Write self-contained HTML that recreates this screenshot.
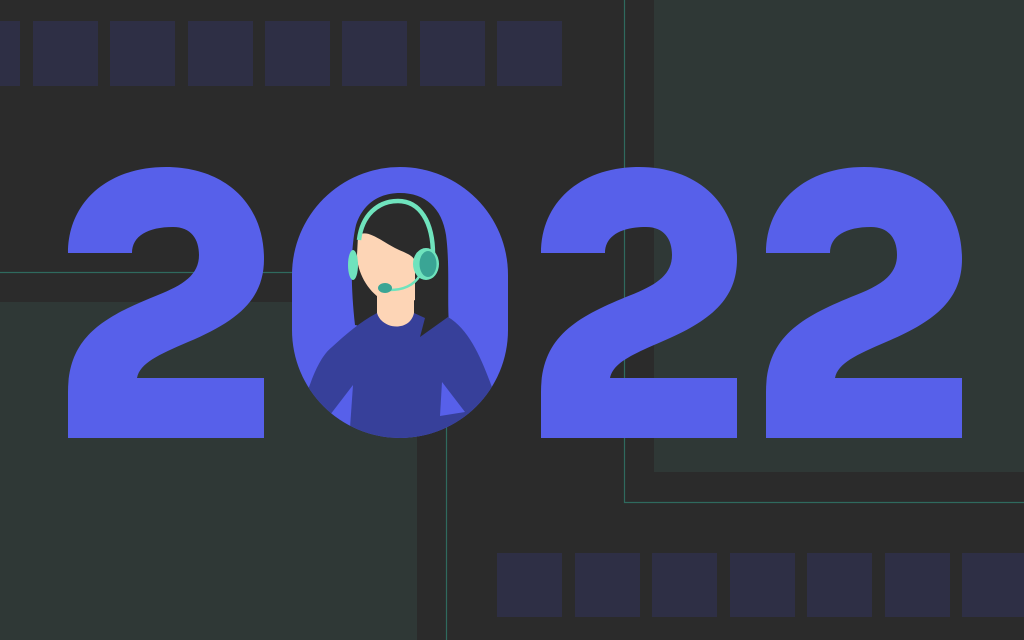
<!DOCTYPE html>
<html><head><meta charset="utf-8"><style>html,body{margin:0;padding:0;background:#2b2b2b;overflow:hidden}svg{display:block}</style></head>
<body>
<svg width="1024" height="640" viewBox="0 0 1024 640" xmlns="http://www.w3.org/2000/svg">
<defs>
<path id="two" d="M0,86 L64,86 C64,69 80,60 105,60 C123,60 131,72 131,88 C131,108 115,118 90,128 C35,150 0,170 0,225 L0,271 L196,271 L196,211 L69,211 C72,196 90,188 120,175 C170,154 196,132 196,92 C196,35 155,0 98,0 C40,0 0,35 0,86 Z"/>
<clipPath id="zero"><rect x="292" y="167" width="216" height="271" rx="108" ry="108"/></clipPath>
</defs>
<rect width="1024" height="640" fill="#2b2b2b"/>
<rect x="654" y="0" width="370" height="472" fill="#2f3836"/>
<rect x="0" y="302" width="417" height="338" fill="#2f3836"/>
<g fill="none" stroke="#2f6a5e" stroke-width="1.2">
<path d="M624.5,0 V502.5 H1024"/>
<path d="M0,272.5 H446.5 V640"/>
</g>
<g fill="#2e2f45">
<rect x="0" y="21" width="20" height="65"/>
<rect x="33" y="21" width="65" height="65"/>
<rect x="110" y="21" width="65" height="65"/>
<rect x="188" y="21" width="65" height="65"/>
<rect x="265" y="21" width="65" height="65"/>
<rect x="342" y="21" width="65" height="65"/>
<rect x="420" y="21" width="65" height="65"/>
<rect x="497" y="21" width="65" height="65"/>
<rect x="497" y="553" width="65" height="64"/>
<rect x="575" y="553" width="65" height="64"/>
<rect x="652" y="553" width="65" height="64"/>
<rect x="730" y="553" width="65" height="64"/>
<rect x="807" y="553" width="65" height="64"/>
<rect x="885" y="553" width="65" height="64"/>
<rect x="962" y="553" width="65" height="64"/>
</g>
<g fill="#5760ea">
<use href="#two" transform="translate(68,167)"/>
<use href="#two" transform="translate(541,167)"/>
<use href="#two" transform="translate(766,167)"/>
</g>
<g clip-path="url(#zero)">
<rect x="292" y="167" width="216" height="271" fill="#5760ea"/>
<!-- hair -->
<path d="M355,325 C351,290 350,250 356,225 C363,203 380,193 400,193 C425,193 442,208 446,235 C450,265 447,300 449,325 L420,338 Z" fill="#2b2b2b"/>
<!-- neck -->
<path d="M377,290 L414,290 L414,320 C408,330 384,330 377,320 Z" fill="#fdd5b6"/>
<!-- face -->
<path d="M358,236 C366,228 380,240 395,248 C405,253 414,255 415,262 L415,300 C406,304 392,304 383,300 C368,292 357,272 357,255 Z" fill="#fdd5b6"/>
<!-- body -->
<path d="M300,440 L308,390 C315,370 322,355 332,347 C345,335 360,322 377,313 C382,330 410,332 414,313 L425,318 L420,337 L448,317 C470,330 482,360 493,390 L510,440 Z" fill="#37409a"/>
<path d="M330,415 L353,385 L350,428 Z" fill="#5760ea"/>
<path d="M442,382 L465,412 L440,416 Z" fill="#5760ea"/>
<!-- headset -->
<path d="M359,240 C362,215 378,201 398,201 C420,201 433,222 433,255" fill="none" stroke="#6fe3bd" stroke-width="4.5"/>
<ellipse cx="353" cy="265" rx="5" ry="15" fill="#6fe3bd"/>
<ellipse cx="426" cy="264" rx="13" ry="16" fill="#6fe3bd"/>
<ellipse cx="428" cy="264" rx="8.5" ry="13" fill="#3aa595"/>
<path d="M420,275 C414,286 402,290 390,290" fill="none" stroke="#6fe3bd" stroke-width="2.5"/>
<ellipse cx="385" cy="288" rx="7" ry="5" fill="#3aa595"/>
</g>
</svg>
</body></html>
